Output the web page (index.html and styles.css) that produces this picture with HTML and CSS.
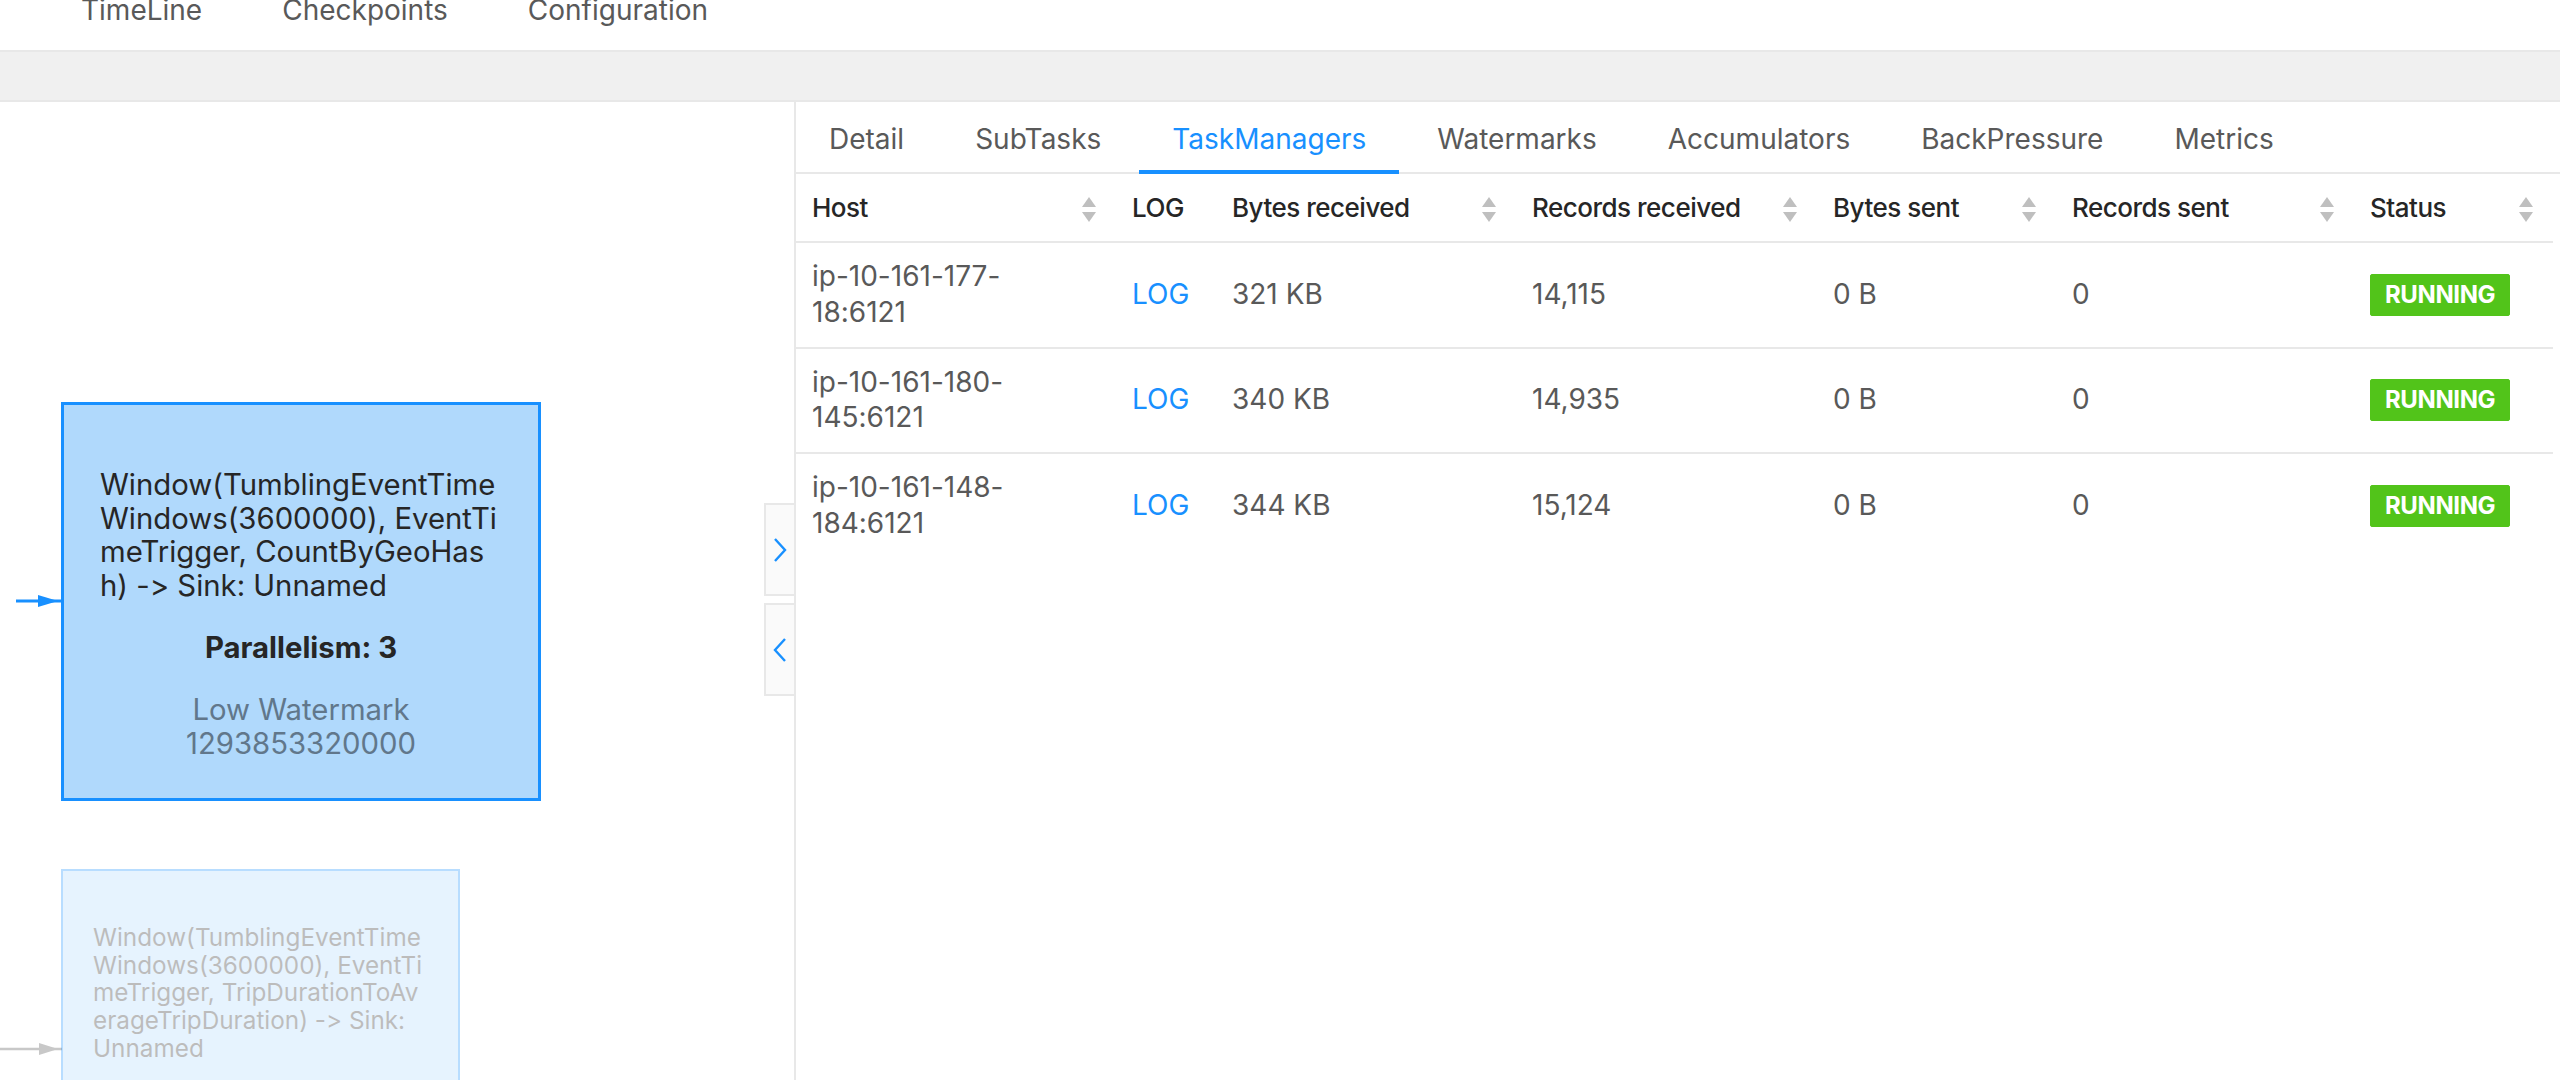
FILE: index.html
```html
<!DOCTYPE html>
<html lang="en">
<head>
<meta charset="utf-8">
<title>Flink Job - TaskManagers</title>
<link rel="stylesheet" href="styles.css">
</head>
<body>
<div class="page">
  <header class="topnav">
    <nav class="nav-list">
      <span class="nav-item">TimeLine</span>
      <span class="nav-item">Checkpoints</span>
      <span class="nav-item">Configuration</span>
    </nav>
  </header>
  <div class="toolbar"></div>
  <main class="main">
    <section class="graph">
      <svg class="edge edge-active" width="62" height="14" viewBox="0 0 62 14">
        <line x1="16" y1="7" x2="62" y2="7" stroke="#1890ff" stroke-width="3"/>
        <polygon points="38,1 58,7 38,13" fill="#1890ff"/>
      </svg>
      <div class="node node-active">
        <div class="node-title">
          <span class="node-line">Window(TumblingEventTime</span>
          <span class="node-line">Windows(3600000), EventTi</span>
          <span class="node-line">meTrigger, CountByGeoHas</span>
          <span class="node-line">h) -&gt; Sink: Unnamed</span>
        </div>
        <div class="node-par">Parallelism: 3</div>
        <div class="node-wm">
          <span class="node-line">Low Watermark</span>
          <span class="node-line">1293853320000</span>
        </div>
      </div>

      <svg class="edge edge-faded" width="62" height="14" viewBox="0 0 62 14">
        <line x1="0" y1="7" x2="62" y2="7" stroke="#c8c8c8" stroke-width="2.5"/>
        <polygon points="39,1 58,7 39,13" fill="#c8c8c8"/>
      </svg>
      <div class="node node-faded">
        <div class="node-title small">
          <span class="node-line">Window(TumblingEventTime</span>
          <span class="node-line">Windows(3600000), EventTi</span>
          <span class="node-line">meTrigger, TripDurationToAv</span>
          <span class="node-line">erageTripDuration) -&gt; Sink:</span>
          <span class="node-line">Unnamed</span>
        </div>
      </div>

      <div class="collapse">
        <button class="collapse-btn" type="button" aria-label="expand">
          <svg width="18" height="26" viewBox="0 0 18 26"><path d="M4 2 L14 13 L4 24" fill="none" stroke="#1890ff" stroke-width="2.4"/></svg>
        </button>
        <button class="collapse-btn" type="button" aria-label="collapse">
          <svg width="18" height="26" viewBox="0 0 18 26"><path d="M14 2 L4 13 L14 24" fill="none" stroke="#1890ff" stroke-width="2.4"/></svg>
        </button>
      </div>
    </section>

    <section class="detail">
      <div class="tabs">
        <div class="tab">Detail</div>
        <div class="tab">SubTasks</div>
        <div class="tab tab-active">TaskManagers</div>
        <div class="tab">Watermarks</div>
        <div class="tab">Accumulators</div>
        <div class="tab">BackPressure</div>
        <div class="tab">Metrics</div>
      </div>

      <table class="tm-table">
        <colgroup>
          <col class="c-host">
          <col class="c-log">
          <col class="c-brecv">
          <col class="c-rrecv">
          <col class="c-bsent">
          <col class="c-rsent">
          <col class="c-status">
        </colgroup>
        <thead>
          <tr>
            <th><div class="th-inner"><span>Host</span><span class="sorter"><i class="up"></i><i class="down"></i></span></div></th>
            <th><div class="th-inner"><span>LOG</span></div></th>
            <th><div class="th-inner"><span>Bytes received</span><span class="sorter"><i class="up"></i><i class="down"></i></span></div></th>
            <th><div class="th-inner"><span>Records received</span><span class="sorter"><i class="up"></i><i class="down"></i></span></div></th>
            <th><div class="th-inner"><span>Bytes sent</span><span class="sorter"><i class="up"></i><i class="down"></i></span></div></th>
            <th><div class="th-inner"><span>Records sent</span><span class="sorter"><i class="up"></i><i class="down"></i></span></div></th>
            <th><div class="th-inner"><span>Status</span><span class="sorter"><i class="up"></i><i class="down"></i></span></div></th>
          </tr>
        </thead>
        <tbody>
          <tr>
            <td><div class="host">ip-10-161-177-18:6121</div></td>
            <td><a class="log-link">LOG</a></td>
            <td>321 KB</td>
            <td>14,115</td>
            <td>0 B</td>
            <td>0</td>
            <td><span class="tag-running">RUNNING</span></td>
          </tr>
          <tr>
            <td><div class="host">ip-10-161-180-145:6121</div></td>
            <td><a class="log-link">LOG</a></td>
            <td>340 KB</td>
            <td>14,935</td>
            <td>0 B</td>
            <td>0</td>
            <td><span class="tag-running">RUNNING</span></td>
          </tr>
          <tr>
            <td><div class="host">ip-10-161-148-184:6121</div></td>
            <td><a class="log-link">LOG</a></td>
            <td>344 KB</td>
            <td>15,124</td>
            <td>0 B</td>
            <td>0</td>
            <td><span class="tag-running">RUNNING</span></td>
          </tr>
        </tbody>
      </table>
    </section>
  </main>
</div>
</body>
</html>
```

FILE: styles.css
```css
* { box-sizing: border-box; }

html, body {
  margin: 0;
  padding: 0;
  background: #ffffff;
}

body {
  font-family: Inter, "Liberation Sans", "Noto Sans", sans-serif;
  font-size: 28px;
  color: #595959;
  font-variant-ligatures: none;
  font-feature-settings: "calt" 0, "liga" 0;
}

.page {
  width: 2560px;
  height: 1080px;
  overflow: hidden;
  display: flex;
  flex-direction: column;
}

/* top navigation (scrolled, partially cut) */
.topnav {
  height: 50px;
  overflow: hidden;
  background: #ffffff;
  flex: none;
}

.nav-list {
  display: flex;
  gap: 80px;
  padding-left: 81px;
  margin-top: -10px;
  line-height: 40px;
}

.nav-item {
  color: #595959;
  font-size: 28px;
}

/* grey band */
.toolbar {
  height: 52px;
  flex: none;
  background: #f0f0f0;
  border-top: 2px solid #e8e8e8;
  border-bottom: 2px solid #e8e8e8;
}

.main {
  flex: 1;
  display: flex;
  min-height: 0;
}

/* graph canvas */
.graph {
  width: 796px;
  flex: none;
  position: relative;
  border-right: 2px solid #e8e8e8;
  overflow: hidden;
}

.edge {
  position: absolute;
  left: 0;
  display: block;
}

.edge-active { top: 492px; }
.edge-faded { top: 940px; }

.node {
  position: absolute;
  left: 61px;
  color: #262626;
}

.node-active {
  top: 300px;
  width: 480px;
  height: 399px;
  background: #b0d9fc;
  border: 3px solid #1890ff;
  padding: 63px 0 0 36px;
}

.node-faded {
  top: 767px;
  width: 399px;
  height: 331px;
  background: #b0d9fc;
  border: 2px solid #1890ff;
  padding: 53px 0 0 30px;
  opacity: 0.3;
}

.node-title {
  font-size: 29.3px;
  line-height: 33.5px;
}

.node-title.small {
  font-size: 24.3px;
  line-height: 27.7px;
}

.node-line {
  display: block;
  white-space: nowrap;
}

.node-par {
  margin: 29px 0 0 -36px;
  text-align: center;
  font-weight: 700;
  font-size: 29.3px;
  line-height: 34px;
}

.node-wm {
  margin: 28px 0 0 -36px;
  text-align: center;
  color: #61778b;
  font-size: 29.3px;
  line-height: 33.5px;
}

/* collapse buttons on the divider */
.collapse {
  position: absolute;
  right: 0;
  top: 401px;
  width: 30px;
  display: flex;
  flex-direction: column;
  gap: 7px;
}

.collapse-btn {
  width: 30px;
  height: 93px;
  padding: 0;
  margin: 0;
  background: #fafafa;
  border: 2px solid #e8e8e8;
  border-right: none;
  display: flex;
  align-items: center;
  justify-content: center;
  cursor: pointer;
}

.collapse-btn svg { display: block; }

/* detail panel */
.detail {
  flex: 1;
  min-width: 0;
  display: flex;
  flex-direction: column;
}

.tabs {
  height: 72px;
  flex: none;
  display: flex;
  gap: 5px;
  border-bottom: 2px solid #e8e8e8;
}

.tab {
  position: relative;
  height: 70px;
  padding: 4px 33px 0;
  display: flex;
  align-items: center;
  color: #595959;
  font-size: 28px;
  white-space: nowrap;
}

.tab-active {
  color: #1890ff;
}

.tab-active::after {
  content: "";
  position: absolute;
  left: 0;
  right: 0;
  bottom: -2px;
  height: 4px;
  background: #1890ff;
}

/* table */
.tm-table {
  width: 1757px;
  border-collapse: collapse;
  table-layout: fixed;
  font-size: 28px;
}

.c-host { width: 320px; }
.c-log { width: 100px; }
.c-brecv { width: 300px; }
.c-rrecv { width: 301px; }
.c-bsent { width: 239px; }
.c-rsent { width: 298px; }
.c-status { width: 199px; }

.tm-table th {
  text-align: left;
  font-weight: 500;
  font-size: 26px;
  letter-spacing: -0.5px;
  color: #262626;
  padding: 16px 20px 16px 16px;
  line-height: 35px;
  border-bottom: 2px solid #e8e8e8;
}

.th-inner {
  display: flex;
  align-items: center;
  justify-content: space-between;
  white-space: nowrap;
}

.sorter {
  display: flex;
  flex-direction: column;
  gap: 5px;
  margin-top: 3px;
}

.sorter i {
  display: block;
  width: 0;
  height: 0;
  border-left: 7px solid transparent;
  border-right: 7px solid transparent;
}

.sorter .up { border-bottom: 10px solid #bfbfbf; }
.sorter .down { border-top: 10px solid #bfbfbf; }

.tm-table td {
  padding: 16px;
  line-height: 35.75px;
  color: #595959;
  border-bottom: 2px solid #e8e8e8;
  vertical-align: middle;
  white-space: nowrap;
}

.tm-table tbody tr:last-child td {
  border-bottom: none;
}

.tm-table td .host {
  width: 215px;
  white-space: normal;
}

.log-link {
  color: #1890ff;
  text-decoration: none;
}

.tag-running {
  display: inline-block;
  height: 42px;
  line-height: 40px;
  padding: 0 14px;
  background: #52c41a;
  border: 1px solid #52c41a;
  border-radius: 2px;
  color: #ffffff;
  font-size: 24px;
  font-weight: 700;
  letter-spacing: -0.4px;
  vertical-align: middle;
}
```
